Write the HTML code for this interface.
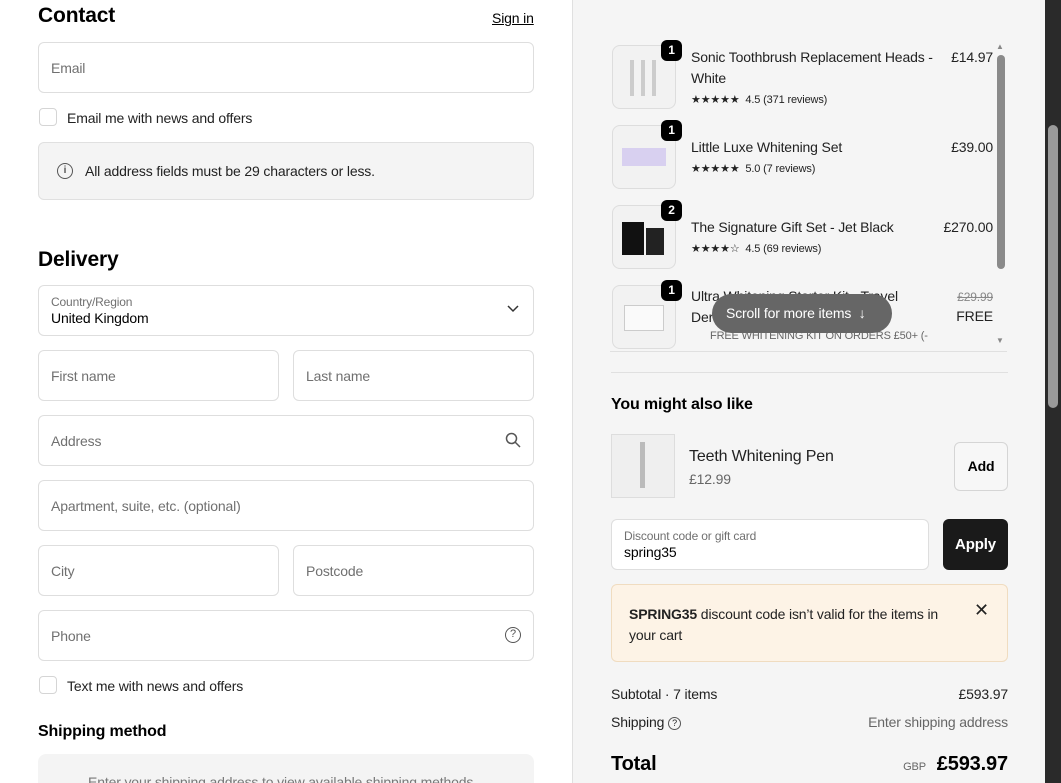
<!DOCTYPE html><html><head><style>
*{box-sizing:border-box;margin:0;padding:0}
html,body{width:1061px;height:783px;overflow:hidden}
body{font-family:"Liberation Sans",sans-serif;color:#000;background:#fff;position:relative;font-size:14px;letter-spacing:-0.15px}
.a{position:absolute}
.in{position:absolute;border:1px solid #dedede;border-radius:6px;background:#fff;font-size:14px;color:#707070;padding-left:12px;display:flex;align-items:center}
.cb{position:absolute;width:18px;height:18px;border:1px solid #d5d5d5;border-radius:4px;background:#fff}
h2{position:absolute;font-size:21px;font-weight:600}
.th{position:absolute;left:612px;width:64px;height:64px;border:1px solid #ddd;border-radius:8px;background:#f2f2f2}
.bd{position:absolute;left:661px;width:21px;height:21px;background:#000;color:#fff;border-radius:6px;font-size:12px;font-weight:bold;text-align:center;line-height:21px}
.nm{position:absolute;left:691px;font-size:14px;color:#222;line-height:21px}
.st{position:absolute;left:691px;font-size:11px;color:#222}
.pr{position:absolute;right:68px;font-size:14px;color:#222}
</style></head><body>
<div class="a" style="left:572px;top:0;width:473px;height:783px;background:#f5f5f5;border-left:1px solid #e0e0e0"></div>
<div class="a" style="left:1045px;top:0;width:16px;height:783px;background:#2a2a2a"></div>
<div class="a" style="left:1048px;top:125px;width:10px;height:283px;background:#9a9a9a;border-radius:5px"></div>

<h2 style="left:38px;top:4px">Contact</h2>
<div class="a" style="left:492px;top:10px;font-size:14px;text-decoration:underline">Sign in</div>
<div class="in" style="left:38px;top:42px;width:496px;height:51px">Email</div>
<div class="cb" style="left:39px;top:108px"></div>
<div class="a" style="left:67px;top:110px;font-size:14px;color:#222">Email me with news and offers</div>
<div class="a" style="left:38px;top:142px;width:496px;height:58px;background:#f4f4f4;border:1px solid #e0e0e0;border-radius:6px"></div>
<div class="a" style="left:57px;top:163px;width:16px;height:16px;border:1.5px solid #555;border-radius:50%;font-size:10px;text-align:center;line-height:13px;color:#555;font-weight:bold">i</div>
<div class="a" style="left:85px;top:163px;font-size:14px;color:#222">All address fields must be 29 characters or less.</div>

<h2 style="left:38px;top:248px">Delivery</h2>
<div class="in" style="left:38px;top:285px;width:496px;height:51px;display:block;padding-top:9px"><div style="font-size:12px">Country/Region</div><div style="color:#000;font-size:14px;margin-top:1px">United Kingdom</div></div>
<svg class="a" style="left:507px;top:305px" width="12" height="8"><path d="M1 1l5 5 5-5" fill="none" stroke="#333" stroke-width="1.5"/></svg>
<div class="in" style="left:38px;top:350px;width:241px;height:51px">First name</div>
<div class="in" style="left:293px;top:350px;width:241px;height:51px">Last name</div>
<div class="in" style="left:38px;top:415px;width:496px;height:51px">Address</div>
<svg class="a" style="left:505px;top:432px" width="16" height="16"><circle cx="6.5" cy="6.5" r="5" fill="none" stroke="#555" stroke-width="1.5"/><path d="M10 10l5 5" stroke="#555" stroke-width="1.5"/></svg>
<div class="in" style="left:38px;top:480px;width:496px;height:51px">Apartment, suite, etc. (optional)</div>
<div class="in" style="left:38px;top:545px;width:241px;height:51px">City</div>
<div class="in" style="left:293px;top:545px;width:241px;height:51px">Postcode</div>
<div class="in" style="left:38px;top:610px;width:496px;height:51px">Phone</div>
<div class="a" style="left:505px;top:627px;width:16px;height:16px;border:1.5px solid #555;border-radius:50%;font-size:11px;text-align:center;line-height:13px;color:#555">?</div>
<div class="cb" style="left:39px;top:676px"></div>
<div class="a" style="left:67px;top:678px;font-size:14px;color:#222">Text me with news and offers</div>
<div class="a" style="left:38px;top:723px;font-size:16px;font-weight:600">Shipping method</div>
<div class="a" style="left:38px;top:754px;width:496px;height:29px;background:#f4f4f4;border-radius:8px 8px 0 0;overflow:hidden"><div style="padding:20px 0 0 50px;color:#777;font-size:14px">Enter your shipping address to view available shipping methods.</div></div>

<div class="a" style="left:610px;top:40px;width:397px;height:312px;overflow:hidden;border-bottom:1px solid #e0e0e0"></div>
<div class="a" style="left:997px;top:55px;width:8px;height:214px;background:#8a8a8a;border-radius:4px"></div>
<div class="a" style="left:996px;top:42px;font-size:8px;color:#888">▲</div>
<div class="a" style="left:996px;top:336px;font-size:8px;color:#888">▼</div>
<div class="th" style="top:45px"></div><div class="bd" style="top:40px">1</div>
<div class="a" style="left:630px;top:60px;width:4px;height:36px;background:#ccc;box-shadow:11px 0 #ccc,22px 0 #ccc"></div>
<div class="nm" style="top:47px">Sonic Toothbrush Replacement Heads -<br>White</div><div class="pr" style="top:49px">£14.97</div>
<div class="st" style="top:93px">★★★★★ &nbsp;4.5 (371 reviews)</div>
<div class="th" style="top:125px"></div><div class="bd" style="top:120px">1</div>
<div class="a" style="left:622px;top:148px;width:44px;height:18px;background:#d8d0f0"></div>
<div class="nm" style="top:137px">Little Luxe Whitening Set</div><div class="pr" style="top:139px">£39.00</div>
<div class="st" style="top:162px">★★★★★ &nbsp;5.0 (7 reviews)</div>
<div class="th" style="top:205px"></div><div class="bd" style="top:200px">2</div>
<div class="a" style="left:622px;top:222px;width:22px;height:33px;background:#111"></div><div class="a" style="left:646px;top:228px;width:18px;height:27px;background:#222"></div>
<div class="nm" style="top:217px">The Signature Gift Set - Jet Black</div><div class="pr" style="top:219px">£270.00</div>
<div class="st" style="top:242px">★★★★☆ &nbsp;4.5 (69 reviews)</div>
<div class="th" style="top:285px;height:64px"></div><div class="bd" style="top:280px">1</div>
<div class="a" style="left:624px;top:305px;width:40px;height:26px;border:1px solid #ccc;background:#fafafa"></div>
<div class="nm" style="top:286px">Ultra Whitening Starter Kit - Travel<br>Der</div>
<div class="pr" style="top:290px;font-size:12px;color:#888;text-decoration:line-through">£29.99</div><div class="pr" style="top:308px">FREE</div>
<div class="a" style="left:710px;top:330px;font-size:11px;color:#666">FREE WHITENING KIT ON ORDERS £50+ (-</div>
<div class="a" style="left:712px;top:294px;width:180px;height:39px;background:#666;border-radius:20px;color:#fff;font-size:14px;line-height:39px;padding-left:14px">Scroll for more items &nbsp;↓</div>
<div class="a" style="left:611px;top:372px;width:397px;border-top:1px solid #e0e0e0"></div>

<div class="a" style="left:611px;top:396px;font-size:16px;font-weight:600">You might also like</div>
<div class="a" style="left:611px;top:434px;width:64px;height:64px;border:1px solid #ddd;background:#efefef"></div>
<div class="a" style="left:640px;top:442px;width:5px;height:46px;background:#bbb"></div>
<div class="a" style="left:689px;top:448px;font-size:16px;color:#222">Teeth Whitening Pen</div>
<div class="a" style="left:689px;top:471px;font-size:14px;color:#666">£12.99</div>
<div class="a" style="left:954px;top:442px;width:54px;height:49px;border:1px solid #d5d5d5;border-radius:6px;background:#f7f7f7;font-size:14px;font-weight:600;text-align:center;line-height:47px">Add</div>
<div class="in" style="left:611px;top:519px;width:318px;height:51px;display:block;padding-top:9px"><div style="font-size:12px">Discount code or gift card</div><div style="color:#000;font-size:14px;margin-top:1px">spring35</div></div>
<div class="a" style="left:943px;top:519px;width:65px;height:51px;background:#1a1a1a;border-radius:6px;color:#fff;font-size:15px;font-weight:600;text-align:center;line-height:51px">Apply</div>
<div class="a" style="left:611px;top:584px;width:397px;height:78px;background:#fdf3e6;border:1px solid #f0dcc0;border-radius:6px"></div>
<div class="a" style="left:629px;top:604px;width:330px;font-size:14px;line-height:21px;color:#222"><b>SPRING35</b> discount code isn’t valid for the items in your cart</div>
<div class="a" style="left:974px;top:600px;font-size:18px;color:#222">✕</div>
<div class="a" style="left:611px;top:686px;font-size:14px;color:#222">Subtotal · 7 items</div>
<div class="a" style="right:53px;top:686px;font-size:14px;color:#222">£593.97</div>
<div class="a" style="left:611px;top:714px;font-size:14px;color:#222">Shipping <span style="display:inline-block;width:13px;height:13px;border:1.2px solid #555;border-radius:50%;font-size:9px;text-align:center;line-height:11px;vertical-align:1px">?</span></div>
<div class="a" style="right:53px;top:714px;font-size:14px;color:#666">Enter shipping address</div>
<div class="a" style="left:611px;top:753px;font-size:20px;font-weight:600">Total</div>
<div class="a" style="right:53px;top:753px;font-size:20px;font-weight:600"><span style="font-size:11px;color:#666;font-weight:normal">GBP</span> &nbsp;£593.97</div>
</body></html>
